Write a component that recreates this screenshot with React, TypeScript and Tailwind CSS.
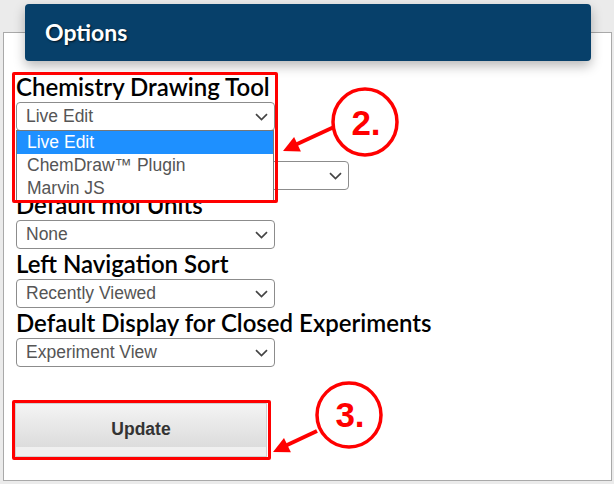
const fields = [
  { label: "Chemistry Drawing Tool", value: "Live Edit", width: "w-[259px]" },
  { label: "", value: "", width: "w-[333px]" },
  { label: "Default mol Units", value: "None", width: "w-[259px]" },
  { label: "Left Navigation Sort", value: "Recently Viewed", width: "w-[259px]" },
  { label: "Default Display for Closed Experiments", value: "Experiment View", width: "w-[259px]" },
];

const options = ["Live Edit", "ChemDraw™ Plugin", "Marvin JS"];

function Chevron() {
  return (
    <svg width="13" height="8" viewBox="0 0 13 8">
      <path d="M1 1.2l5.5 5.3 5.5-5.3" fill="none" stroke="#444" strokeWidth="1.7" />
    </svg>
  );
}

export default function App() {
  return (
    <div className="relative min-h-screen bg-[#ebebeb] pt-[4px] font-['Liberation_Sans',Arial,sans-serif]">
      {/* header */}
      <div className="relative z-10 ml-[25px] flex h-[57px] w-[566px] items-center rounded-[4px] bg-[#07406a] pl-[20px] shadow-[0_5px_12px_rgba(0,0,0,0.28)]">
        <h1 className="font-['Lato',sans-serif] text-[23px] font-bold text-white [text-shadow:1px_1px_2px_rgba(0,0,0,0.7)]">
          Options
        </h1>
      </div>

      <div className="relative -mt-[29px] ml-[3px] h-[449px] w-[609px] border border-[#a9a9a9] bg-white pl-[12px] pt-[39px]">
        {fields.map((f, i) => (
          <div key={i}>
            <div className="h-[30px] whitespace-nowrap font-['Lato',sans-serif] text-[24px] font-semibold leading-[30px] text-black">
              {f.label}
            </div>
            <div
              className={`flex h-[29px] items-center justify-between rounded-[4px] border border-[#8c8c8c] bg-white pl-[9px] pr-[6px] text-[17.5px] text-[#555] ${f.width}`}
            >
              <span>{f.value}</span>
              <Chevron />
            </div>
          </div>
        ))}

        <button className="-ml-[1px] mt-[36px] flex h-[54px] w-[252px] flex-col border border-[#d0d0d0] bg-[#f0f0f0] text-[17.5px] font-bold text-[#333]">
          <span className="flex h-[43px] w-full items-center justify-center bg-gradient-to-b from-[#f4f4f4] to-[#dcdcdc] pt-[8px]">
            Update
          </span>
        </button>

        {/* open dropdown list */}
        <div className="absolute left-[12px] top-[97px] z-10 w-[258px] border border-[#777] bg-white text-[17.5px] text-[#555]">
          {options.map((o, i) => (
            <div
              key={o}
              className={`flex h-[23px] items-center pl-[10px] ${i === 0 ? "bg-[#1e90ff] text-white" : ""}`}
            >
              {o}
            </div>
          ))}
        </div>

        {/* annotation boxes */}
        <div className="absolute left-[8px] top-[39px] z-20 h-[131px] w-[266px] rounded-[2px] border-[3px] border-[#ff0000]" />
        <div className="absolute left-[8px] top-[367px] z-20 h-[60px] w-[259px] rounded-[2px] border-[3px] border-[#ff0000]" />
      </div>

      <svg
        className="pointer-events-none absolute left-0 top-0 z-30"
        width="614"
        height="484"
        viewBox="0 0 614 484"
      >
        <ellipse cx="365" cy="122" rx="32" ry="33" fill="white" stroke="#ff0000" strokeWidth="3.5" />
        <text x="366" y="135" textAnchor="middle" fill="#ff0000" fontFamily="Liberation Sans, Arial, sans-serif" fontWeight="bold" fontSize="35">
          2.
        </text>
        <line x1="334" y1="127" x2="295" y2="145" stroke="#ff0000" strokeWidth="4" />
        <polygon points="283,151 300.9,151.4 294.1,137" fill="#ff0000" />

        <ellipse cx="349" cy="415" rx="32" ry="32" fill="white" stroke="#ff0000" strokeWidth="3.5" />
        <text x="350" y="427" textAnchor="middle" fill="#ff0000" fontFamily="Liberation Sans, Arial, sans-serif" fontWeight="bold" fontSize="35">
          3.
        </text>
        <line x1="317" y1="431" x2="285" y2="446" stroke="#ff0000" strokeWidth="4" />
        <polygon points="273,452 290.9,452.3 284,437.9" fill="#ff0000" />
      </svg>
    </div>
  );
}
